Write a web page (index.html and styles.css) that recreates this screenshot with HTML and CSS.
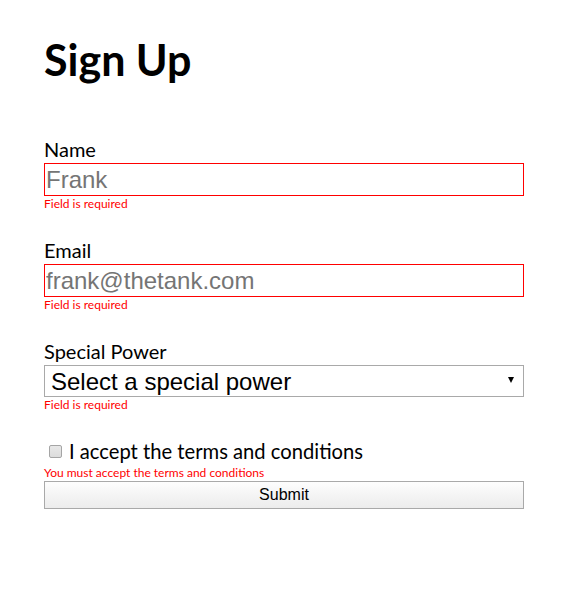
FILE: index.html
```html
<!DOCTYPE html>
<html>
<head>
<meta charset="utf-8">
<link rel="stylesheet" href="styles.css">
</head>
<body>
<div class="page">
  <h1 class="title">Sign Up</h1>
  <form class="form">
    <div class="field">
      <label class="label" for="name">Name</label>
      <input class="input invalid" id="name" type="text" placeholder="Frank">
      <div class="error">Field is required</div>
    </div>
    <div class="field">
      <label class="label" for="email">Email</label>
      <input class="input invalid" id="email" type="email" placeholder="frank@thetank.com">
      <div class="error">Field is required</div>
    </div>
    <div class="field">
      <label class="label" for="power">Special Power</label>
      <div class="select-wrap">
        <select class="select" id="power">
          <option>Select a special power</option>
        </select>
        <span class="arrow"></span>
      </div>
      <div class="error">Field is required</div>
    </div>
    <div class="check-row">
      <input class="checkbox" type="checkbox" id="terms">
      <label class="check-label" for="terms">I accept the terms and conditions</label>
    </div>
    <div class="error">You must accept the terms and conditions</div>
    <button class="submit" type="button">Submit</button>
  </form>
</div>
</body>
</html>
```

FILE: styles.css
```css
html, body {
  margin: 0;
  padding: 0;
  background: #fff;
}

body {
  font-family: "Lato", "Open Sans", sans-serif;
  color: #000;
}

.page {
  width: 480px;
  padding: 32px 0 0 44px;
}

.title {
  margin: 0 0 48px 0;
  font-size: 43px;
  line-height: 56px;
  font-weight: 700;
}

.form {
  display: flex;
  flex-direction: column;
}

.field {
  display: flex;
  flex-direction: column;
  margin-bottom: 25px;
}

.label {
  font-size: 20px;
  line-height: 27px;
}

.input {
  box-sizing: border-box;
  height: 33px;
  width: 480px;
  margin: 0;
  padding: 0 1px;
  font-family: "Liberation Sans", Arial, sans-serif;
  font-size: 24px;
  color: #000;
  border: 1px solid #a9a9a9;
  outline: none;
  background: #fff;
}

.input.invalid {
  border-color: #ff0000;
}

.input::placeholder {
  color: #757575;
}

.error {
  font-size: 12px;
  line-height: 16px;
  color: #ff0000;
}

.select-wrap {
  position: relative;
  width: 480px;
  height: 32px;
}

.select {
  -webkit-appearance: none;
  appearance: none;
  box-sizing: border-box;
  width: 480px;
  height: 32px;
  margin: 0;
  padding: 0 0 0 6px;
  font-family: "Liberation Sans", Arial, sans-serif;
  font-size: 24px;
  color: #000;
  border: 1px solid #a9a9a9;
  border-radius: 0;
  background: #fff;
  outline: none;
}

.arrow {
  position: absolute;
  right: 10px;
  top: 12px;
  width: 0;
  height: 0;
  border-left: 3.5px solid transparent;
  border-right: 3.5px solid transparent;
  border-top: 6px solid #000;
}

.check-row {
  display: flex;
  align-items: center;
  height: 27px;
}

.checkbox {
  -webkit-appearance: none;
  appearance: none;
  box-sizing: border-box;
  width: 13px;
  height: 13px;
  margin: 0 7px 0 5px;
  border: 1px solid #a5a5a5;
  border-radius: 2px;
  background: linear-gradient(#e8e8e8, #dcdcdc);
}

.check-label {
  font-size: 20.2px;
  line-height: 27px;
}

.submit {
  box-sizing: border-box;
  width: 480px;
  height: 28px;
  margin: 0;
  padding: 0;
  font-family: "Liberation Sans", Arial, sans-serif;
  font-size: 16px;
  color: #000;
  border: 1px solid #a9a9a9;
  border-radius: 0;
  background: linear-gradient(#fdfdfd, #ececec);
}
```
